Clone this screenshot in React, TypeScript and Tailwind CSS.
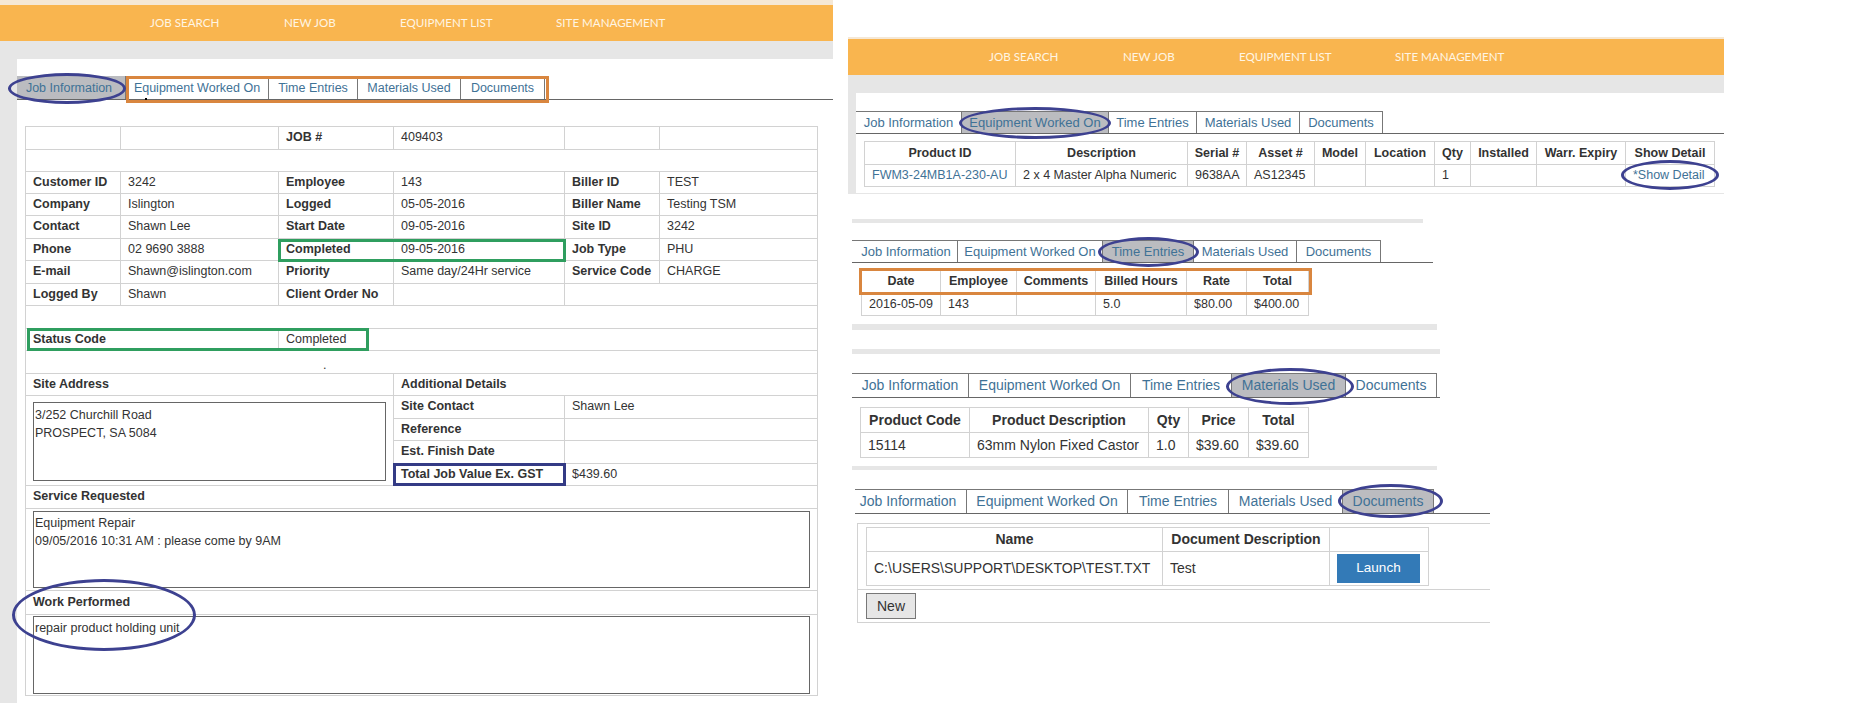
import type { ReactNode } from "react";

const navLinks = [
  { label: "JOB SEARCH", w: 134 },
  { label: "NEW JOB", w: 116 },
  { label: "EQUIPMENT LIST", w: 156 },
  { label: "SITE MANAGEMENT", w: 108 },
];

const tabNames = ["Job Information", "Equipment Worked On", "Time Entries", "Materials Used", "Documents"];

const TopBar = ({ inset, cream }: { inset: string; cream: string }) => (
  <>
    <div className={`bg-[#f5e8d6] ${cream}`} />
    <div className={`flex h-[36px] items-center bg-[#f9b54f] ${inset}`}>
      {navLinks.map((n) => (
        <span
          key={n.label}
          style={{ width: n.w }}
          className="shrink-0 whitespace-nowrap font-['Lato',sans-serif] text-[11.6px] text-[#fff5e4]"
        >
          {n.label}
        </span>
      ))}
    </div>
  </>
);

const Tabs = ({
  widths,
  active,
  size,
  top = true,
  first = "",
}: {
  widths: number[];
  active: number;
  size: string;
  top?: boolean;
  first?: string;
}) => (
  <div className={`flex border-b border-[#666] ${size}`}>
    {widths.map((w, i) => (
      <div
        key={tabNames[i]}
        style={{ width: w }}
        className={`flex shrink-0 items-center justify-center border-r border-[#777] text-[#3f7296] ${
          top ? "border-t" : "pt-[2px]"
        } ${i === active ? "bg-[#bbbcc0]" : "bg-white"} ${i === 0 ? first : ""}`}
      >
        {tabNames[i]}
      </div>
    ))}
  </div>
);

const DataTable = ({
  cols,
  head,
  rows,
  size,
  heights,
}: {
  cols: number[];
  head: string[];
  rows: ReactNode[][];
  size: string;
  heights: number[];
}) => (
  <table className={`table-fixed border-collapse text-[#333] ${size}`} style={{ width: cols.reduce((a, b) => a + b, 0) }}>
    <colgroup>
      {cols.map((c, i) => (
        <col key={i} style={{ width: c }} />
      ))}
    </colgroup>
    <tbody>
      <tr style={{ height: heights[0] }}>
        {head.map((h, i) => (
          <th key={i} className="overflow-hidden whitespace-nowrap border border-[#d2d2d2] px-0 text-center font-bold">
            {h}
          </th>
        ))}
      </tr>
      {rows.map((r, ri) => (
        <tr key={ri} style={{ height: heights[1] }}>
          {r.map((c, i) => (
            <td key={i} className="overflow-hidden whitespace-nowrap border border-[#d2d2d2] px-[7px]">
              {c}
            </td>
          ))}
        </tr>
      ))}
    </tbody>
  </table>
);

const cell = "border border-[#d2d2d2] px-[7px] pb-[1px] whitespace-nowrap";
const label = `${cell} font-bold`;

const infoRows: [string, string, string, string, string, string, number][] = [
  ["Customer ID", "3242", "Employee", "143", "Biller ID", "TEST", 22],
  ["Company", "Islington", "Logged", "05-05-2016", "Biller Name", "Testing TSM", 22],
  ["Contact", "Shawn Lee", "Start Date", "09-05-2016", "Site ID", "3242", 23],
  ["Phone", "02 9690 3888", "Completed", "09-05-2016", "Job Type", "PHU", 22],
  ["E-mail", "Shawn@islington.com", "Priority", "Same day/24Hr service", "Service Code", "CHARGE", 23],
];

const JobTable = () => (
  <table className="w-[792px] table-fixed border-collapse font-['Liberation_Sans',sans-serif] text-[12.5px] text-[#333]">
    <colgroup>
      <col className="w-[95px]" />
      <col className="w-[158px]" />
      <col className="w-[115px]" />
      <col className="w-[171px]" />
      <col className="w-[95px]" />
      <col className="w-[158px]" />
    </colgroup>
    <tbody>
      <tr className="h-[23px]">
        <td className={cell} />
        <td className={cell} />
        <td className={label}>JOB #</td>
        <td className={cell}>409403</td>
        <td className={cell} />
        <td className={cell} />
      </tr>
      <tr className="h-[22px]">
        <td className={cell} colSpan={6} />
      </tr>
      {infoRows.map((r) => (
        <tr key={r[0]} style={{ height: r[6] }}>
          <td className={label}>{r[0]}</td>
          <td className={cell}>{r[1]}</td>
          <td className={label}>{r[2]}</td>
          <td className={cell}>{r[3]}</td>
          <td className={label}>{r[4]}</td>
          <td className={cell}>{r[5]}</td>
        </tr>
      ))}
      <tr className="h-[22px]">
        <td className={label}>Logged By</td>
        <td className={cell}>Shawn</td>
        <td className={label}>Client Order No</td>
        <td className={cell} />
        <td className={cell} colSpan={2} />
      </tr>
      <tr className="h-[23px]">
        <td className={cell} colSpan={6} />
      </tr>
      <tr className="h-[22px]">
        <td className={label} colSpan={2}>Status Code</td>
        <td className={cell} colSpan={4}>Completed</td>
      </tr>
      <tr className="h-[23px]">
        <td className={`${cell} pl-[297px] align-bottom leading-[14px]`} colSpan={6}>.</td>
      </tr>
      <tr className="h-[22px]">
        <td className={label} colSpan={3}>Site Address</td>
        <td className={label} colSpan={3}>Additional Details</td>
      </tr>
      <tr className="h-[23px]">
        <td className={`${cell} align-top`} colSpan={3} rowSpan={4}>
          <div className="mt-[6px] h-[79px] border border-[#666] px-[1px] pt-[3px] leading-[18px]">
            3/252 Churchill Road
            <br />
            PROSPECT, SA 5084
          </div>
        </td>
        <td className={label}>Site Contact</td>
        <td className={cell} colSpan={2}>Shawn Lee</td>
      </tr>
      <tr className="h-[22px]">
        <td className={label}>Reference</td>
        <td className={cell} colSpan={2} />
      </tr>
      <tr className="h-[23px]">
        <td className={label}>Est. Finish Date</td>
        <td className={cell} colSpan={2} />
      </tr>
      <tr className="h-[22px]">
        <td className={label}>Total Job Value Ex. GST</td>
        <td className={cell} colSpan={2}>$439.60</td>
      </tr>
      <tr className="h-[23px]">
        <td className={label} colSpan={6}>Service Requested</td>
      </tr>
      <tr className="h-[82px]">
        <td className={`${cell} align-top`} colSpan={6}>
          <div className="mt-[2px] h-[77px] border border-[#666] px-[1px] pt-[2px] leading-[18px]">
            Equipment Repair
            <br />
            09/05/2016 10:31 AM : please come by 9AM
          </div>
        </td>
      </tr>
      <tr className="h-[24px]">
        <td className={label} colSpan={6}>Work Performed</td>
      </tr>
      <tr className="h-[81px]">
        <td className={`${cell} align-top`} colSpan={6}>
          <div className="mt-[1px] h-[78px] border border-[#666] px-[1px] pt-[2px] leading-[18px]">
            repair product holding unit
          </div>
        </td>
      </tr>
    </tbody>
  </table>
);

const Ellipse = ({ c }: { c: string }) => (
  <div className={`pointer-events-none absolute rounded-[50%] border-[3px] border-[#3d4190] ${c}`} />
);
const Box = ({ c }: { c: string }) => <div className={`pointer-events-none absolute ${c}`} />;

const linkText = "text-[#3f7296]";

export default function App() {
  return (
    <div className="relative flex h-[718px] w-[1856px] overflow-hidden bg-white font-['Liberation_Sans',sans-serif]">
      {/* main job page */}
      <div className="w-[833px] shrink-0">
        <TopBar inset="pl-[150px]" cream="h-[5px]" />
        <div className="h-[18px] bg-[#e6e6e6]" />
        <div className="h-[644px] border-l-[17px] border-[#e6e6e6] pt-[17px]">
          <div className="h-[24px]">
            <Tabs widths={[109, 143, 89, 103, 84]} active={0} size="h-[24px] text-[12.5px]" top={false} first="pr-[4px]" />
          </div>
          <div className="ml-[8px] mt-[26px]">
            <JobTable />
          </div>
        </div>
      </div>

      {/* tab variants */}
      <div className="ml-[15px] w-[1000px] shrink-0">
        <div className="mt-[37px] w-[876px]">
          <TopBar inset="pl-[141px]" cream="h-[2px]" />
          <div className="h-[18px] bg-[#e6e6e6]" />
          <div className="h-[101px] border-b border-l-[8px] border-[#e6e6e6] pt-[18px]">
            <Tabs widths={[106, 147, 88, 103, 83]} active={1} size="h-[23px] text-[13px]" />
            <div className="ml-[8px] mt-[7px]">
              <DataTable
                cols={[151, 172, 59, 68, 51, 69, 36, 66, 89, 89]}
                head={["Product ID", "Description", "Serial #", "Asset #", "Model", "Location", "Qty", "Installed", "Warr. Expiry", "Show Detail"]}
                rows={[[
                  <span className={linkText}>FWM3-24MB1A-230-AU</span>,
                  "2 x 4 Master Alpha Numeric",
                  "9638AA",
                  "AS12345",
                  "",
                  "",
                  "1",
                  "",
                  "",
                  <span className={linkText}>*Show Detail</span>,
                ]]}
                size="text-[12.5px]"
                heights={[23, 22]}
              />
            </div>
          </div>
        </div>

        <div className="mt-[25px] ml-[4px] w-[585px]">
          <div className="h-[4px] w-[571px] bg-[#e6e6e6]" />
          <div className="mt-[17px] w-[581px]">
            <Tabs widths={[106, 145, 91, 103, 84]} active={2} size="h-[23px] text-[13px]" first="pl-[3px]" />
          </div>
          <div className="ml-[9px] mt-[6px]">
            <DataTable
              cols={[79, 76, 79, 91, 60, 62]}
              head={["Date", "Employee", "Comments", "Billed Hours", "Rate", "Total"]}
              rows={[["2016-05-09", "143", "", "5.0", "$80.00", "$400.00"]]}
              size="text-[12.5px]"
              heights={[24, 22]}
            />
          </div>
          <div className="mt-[8px] h-[6px] bg-[#e6e6e6]" />
          <div className="mt-[19px] h-[5px] w-[588px] bg-[#e6e6e6]" />
        </div>

        <div className="mt-[19px] ml-[4px] w-[588px]">
          <Tabs widths={[117, 162, 101, 114, 91]} active={3} size="h-[25px] text-[14px]" />
          <div className="ml-[8px] mt-[9px]">
            <DataTable
              cols={[109, 179, 40, 60, 60]}
              head={["Product Code", "Product Description", "Qty", "Price", "Total"]}
              rows={[["15114", "63mm Nylon Fixed Castor", "1.0", "$39.60", "$39.60"]]}
              size="text-[14px]"
              heights={[25, 25]}
            />
          </div>
          <div className="mt-[8px] h-[4px] w-[585px] bg-[#e6e6e6]" />
        </div>

        <div className="mt-[19px] ml-[7px] w-[635px]">
          <Tabs widths={[112, 161, 101, 114, 91]} active={4} size="h-[25px] text-[14px]" first="pr-[5px]" />
          <div className="ml-[2px] mt-[9px] h-[100px] border-y border-l border-[#d2d2d2] pl-[8px] pt-[3px]">
            <DataTable
              cols={[296, 167, 99]}
              head={["Name", "Document Description", ""]}
              rows={[[
                "C:\\USERS\\SUPPORT\\DESKTOP\\TEST.TXT",
                "Test",
                <button className="flex h-[29px] w-[83px] items-center justify-center bg-[#337ab7] text-[13.5px] text-white">
                  Launch
                </button>,
              ]]}
              size="text-[14px]"
              heights={[24, 34]}
            />
            <div className="-ml-[8px] mt-[3px] border-t border-[#d2d2d2] pl-[8px] pt-[3px]">
              <button className="h-[26px] w-[50px] border border-[#777] bg-[#e6e6e6] text-[14px] text-[#333]">New</button>
            </div>
          </div>
        </div>
      </div>

      {/* annotations drawn over the screenshots */}
      <Ellipse c="left-[8px] top-[73px] h-[31px] w-[118px]" />
      <Box c="left-[126px] top-[76px] h-[27px] w-[423px] border-[3px] border-[#d9863f]" />
      <Box c="left-[145px] top-[98px] h-[2px] w-[2px] bg-black" />
      <Box c="left-[278px] top-[239px] h-[23px] w-[288px] border-[3px] border-[#2f9e5f]" />
      <Box c="left-[27px] top-[328px] h-[23px] w-[342px] border-[3px] border-[#2f9e5f]" />
      <Box c="left-[393px] top-[463px] h-[23px] w-[173px] border-[3px] border-[#343b85]" />
      <Ellipse c="left-[12px] top-[579px] h-[72px] w-[184px]" />
      <Ellipse c="left-[959px] top-[107px] h-[32px] w-[152px]" />
      <Ellipse c="left-[1621px] top-[160px] h-[30px] w-[98px]" />
      <Ellipse c="left-[1098px] top-[237px] h-[30px] w-[101px]" />
      <Box c="left-[859px] top-[268px] h-[27px] w-[453px] border-[3px] border-[#d9863f]" />
      <Ellipse c="left-[1226px] top-[368px] h-[37px] w-[128px]" />
      <Ellipse c="left-[1338px] top-[484px] h-[34px] w-[105px]" />
    </div>
  );
}
